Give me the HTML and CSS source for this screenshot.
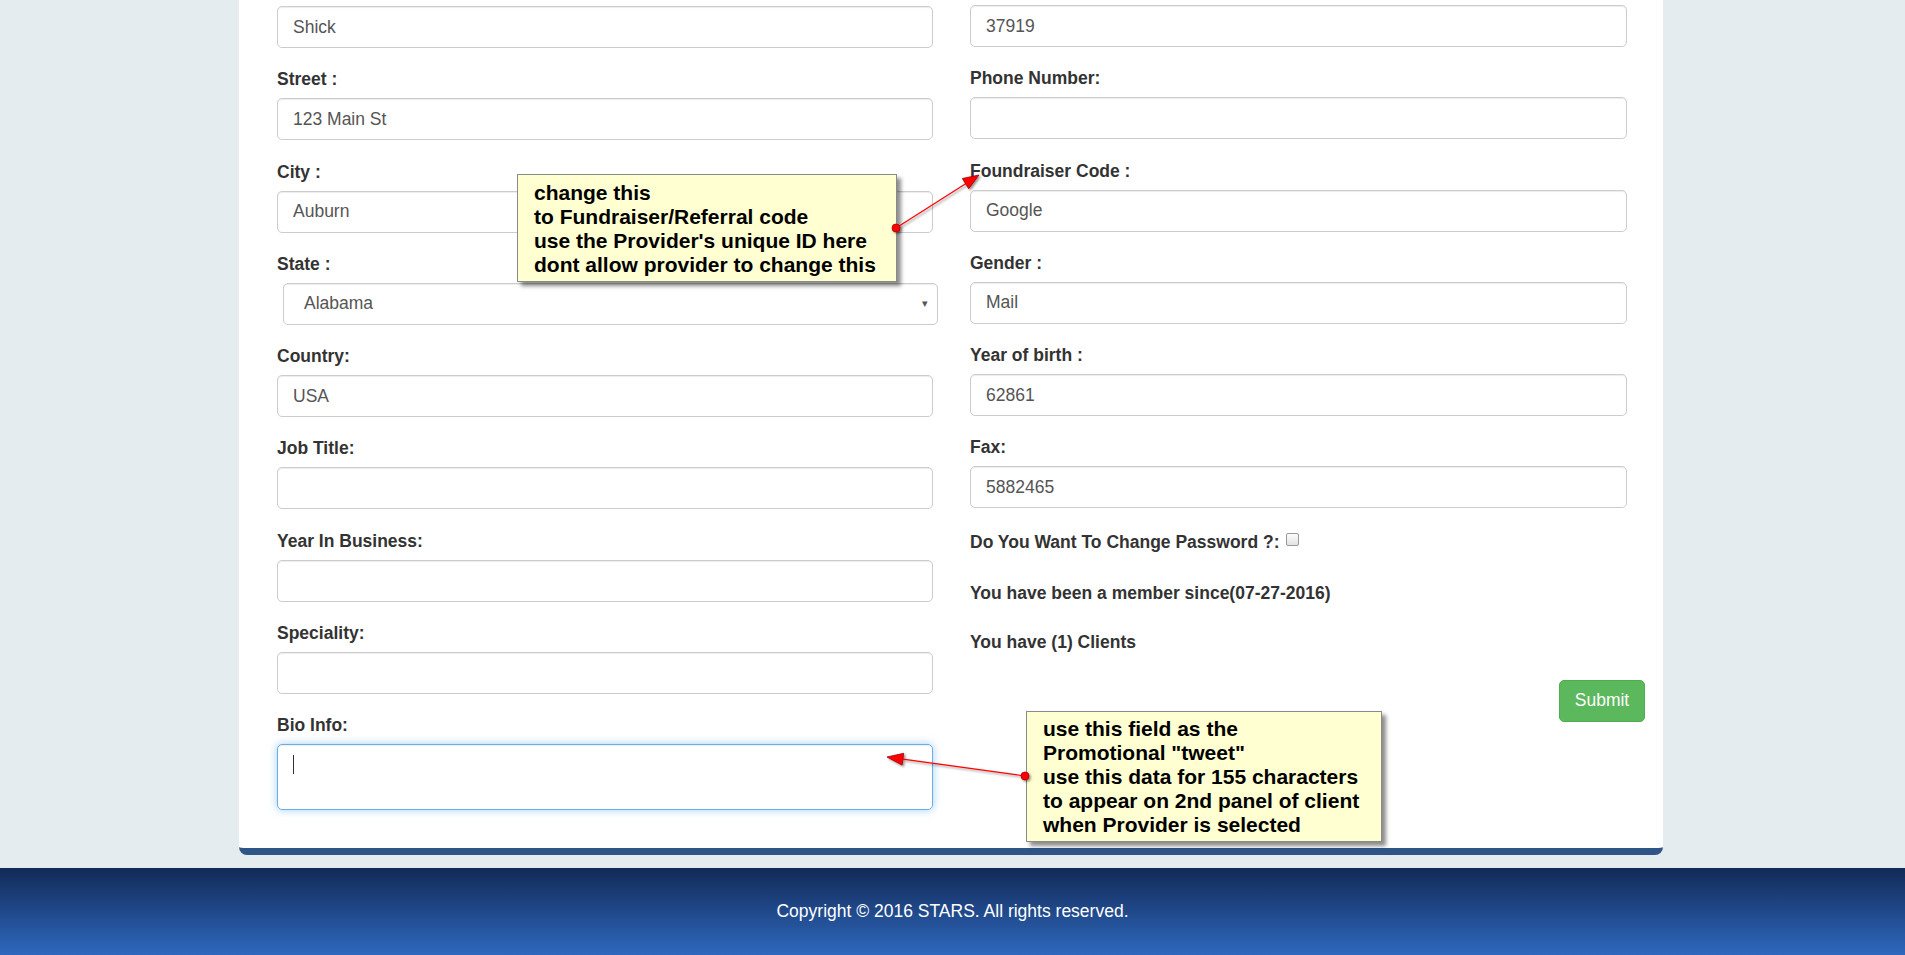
FILE: index.html
```html
<!DOCTYPE html>
<html lang="en">
<head>
<meta charset="utf-8">
<title>Profile</title>
<link rel="stylesheet" href="styles.css">
</head>
<body>
<div class="page">
  <div class="panel">
    <div class="form-grid">
      <div class="col col-left">
        <input class="field first" type="text" value="Shick">
        <div class="group"><label>Street :</label><input class="field" type="text" value="123 Main St"></div>
        <div class="group"><label>City :</label><input class="field" type="text" value="Auburn"></div>
        <div class="group"><label>State :</label>
          <div class="select"><span>Alabama</span><span class="sel-arrow">&#9662;</span></div>
        </div>
        <div class="group"><label>Country:</label><input class="field" type="text" value="USA"></div>
        <div class="group"><label>Job Title:</label><input class="field" type="text" value=""></div>
        <div class="group"><label>Year In Business:</label><input class="field" type="text" value=""></div>
        <div class="group"><label>Speciality:</label><input class="field" type="text" value=""></div>
        <div class="group"><label>Bio Info:</label>
          <div class="textarea"><span class="caret"></span></div>
        </div>
      </div>
      <div class="col col-right">
        <input class="field first" type="text" value="37919">
        <div class="group"><label>Phone Number:</label><input class="field" type="text" value=""></div>
        <div class="group"><label>Foundraiser Code :</label><input class="field" type="text" value="Google"></div>
        <div class="group"><label>Gender :</label><input class="field" type="text" value="Mail"></div>
        <div class="group"><label>Year of birth :</label><input class="field" type="text" value="62861"></div>
        <div class="group"><label>Fax:</label><input class="field" type="text" value="5882465"></div>
        <div class="text-row pw">Do You Want To Change Password ?:<span class="check"></span></div>
        <div class="text-row member">You have been a member since(07-27-2016)</div>
        <div class="text-row clients">You have (1) Clients</div>
        <div class="submit-row"><button class="btn-submit" type="button">Submit</button></div>
      </div>
    </div>
  </div>
  <footer class="footer">Copyright &copy; 2016 STARS. All rights reserved.</footer>

  <div class="note note1">change this<br>to Fundraiser/Referral code<br>use the Provider's unique ID here<br>dont allow provider to change this</div>
  <div class="note note2">use this field as the<br>Promotional "tweet"<br>use this data for 155 characters<br>to appear on 2nd panel of client<br>when Provider is selected</div>

  <svg class="arrows" width="1905" height="955" viewBox="0 0 1905 955">
    <defs>
      <filter id="sh" x="-50%" y="-50%" width="200%" height="200%">
        <feDropShadow dx="1.5" dy="1.5" stdDeviation="1" flood-color="#000" flood-opacity="0.45"/>
      </filter>
    </defs>
    <g filter="url(#sh)">
      <line x1="896" y1="228" x2="966" y2="183.5" stroke="#ff0000" stroke-width="1.2"/>
      <polygon points="979,175 968.7,188.7 962.3,178.5" fill="#ff0000" stroke="#a00000" stroke-width="0.8"/>
      <circle cx="896" cy="228" r="4" fill="#ff0000" stroke="#b00000" stroke-width="0.8"/>

      <line x1="1025" y1="776" x2="903" y2="759.2" stroke="#ff0000" stroke-width="1.2"/>
      <polygon points="887,757 903.7,753.3 902.1,765.1" fill="#ff0000" stroke="#a00000" stroke-width="0.8"/>
      <circle cx="1025" cy="776" r="4" fill="#ff0000" stroke="#b00000" stroke-width="0.8"/>
    </g>
  </svg>
</div>
</body>
</html>
```

FILE: styles.css
```css
* { box-sizing: border-box; }

html, body {
  margin: 0;
  padding: 0;
}

body {
  background: #e4ecef;
  font-family: "Liberation Sans", Arial, Helvetica, sans-serif;
  color: #333;
  width: 1905px;
  height: 955px;
  overflow: hidden;
}

.page {
  position: relative;
  width: 1905px;
  height: 955px;
}

.panel {
  margin: 0 242px 0 239px;
  width: 1424px;
  background: #fff;
  border-bottom: 7px solid #2f5586;
  border-radius: 0 0 8px 8px;
  padding: 0 36px 38px 38px;
}

.form-grid {
  display: grid;
  grid-template-columns: 656px 657px;
  column-gap: 37px;
}

.col { display: flex; flex-direction: column; }

.col-left .first { margin-top: 6px; }
.col-right .first { margin-top: 5px; }

.group { margin-top: 18.3px; }

label {
  display: block;
  font-weight: bold;
  font-size: 17.5px;
  line-height: 24px;
  padding-top: 1px;
  margin-bottom: 7px;
  color: #333;
}

.field {
  display: block;
  width: 100%;
  height: 42px;
  padding: 0 15px;
  font-family: "Liberation Sans", Arial, Helvetica, sans-serif;
  font-size: 17.5px;
  color: #555;
  background: #fff;
  border: 1px solid #ccc;
  border-radius: 5px;
  box-shadow: inset 0 1px 1px rgba(0, 0, 0, 0.075);
  outline: none;
}

.select {
  display: flex;
  align-items: center;
  justify-content: space-between;
  height: 42px;
  margin-left: 6px;
  margin-right: -5px;
  padding: 0 9px 0 20px;
  font-size: 17.5px;
  color: #555;
  border: 1px solid #ccc;
  border-radius: 5px;
  box-shadow: inset 0 1px 1px rgba(0, 0, 0, 0.075);
}

.sel-arrow {
  font-size: 11px;
  color: #555;
}

.textarea {
  height: 66px;
  padding: 10px 15px;
  border: 1px solid #66afe9;
  border-radius: 5px;
  box-shadow: inset 0 1px 1px rgba(0, 0, 0, 0.075), 0 0 8px rgba(102, 175, 233, 0.6);
}

.caret {
  display: block;
  width: 1px;
  height: 19px;
  background: #333;
}

.text-row {
  font-weight: bold;
  font-size: 17.5px;
  line-height: 24px;
  color: #333;
}

.pw { margin-top: 22px; display: flex; align-items: center; }
.member { margin-top: 27px; }
.clients { margin-top: 25px; }

.check {
  display: inline-block;
  width: 13px;
  height: 13px;
  margin: -6px 0 0 6px;
  border: 1px solid #9a9a9a;
  border-radius: 2px;
  background: linear-gradient(#fdfdfd, #e2e2e2);
}

.submit-row {
  display: flex;
  justify-content: flex-end;
  margin-top: 25.5px;
  margin-right: -18px;
}

.btn-submit {
  width: 86px;
  height: 42px;
  font-family: "Liberation Sans", Arial, Helvetica, sans-serif;
  font-size: 17.5px;
  color: #fff;
  background: #5cb85c;
  border: 1px solid #4cae4c;
  border-radius: 5px;
  padding: 0;
}

.footer {
  margin-top: 13px;
  height: 87px;
  display: flex;
  align-items: center;
  justify-content: center;
  background: linear-gradient(#122a57, #2e68be);
  color: #fff;
  font-size: 17.5px;
}

.note {
  position: absolute;
  background: #ffffd2;
  border: 1px solid #8a8a8a;
  box-shadow: 4px 4px 4px rgba(0, 0, 0, 0.45);
  font-family: "Liberation Sans", Arial, Helvetica, sans-serif;
  font-weight: bold;
  font-size: 21px;
  line-height: 24px;
  color: #000;
  padding-left: 16px;
  white-space: nowrap;
}

.note1 {
  left: 517px;
  top: 174px;
  width: 380px;
  height: 108px;
  padding-top: 6px;
}

.note2 {
  left: 1026px;
  top: 711px;
  width: 356px;
  height: 131px;
  padding-top: 5px;
}

.arrows {
  position: absolute;
  left: 0;
  top: 0;
  pointer-events: none;
}
```
